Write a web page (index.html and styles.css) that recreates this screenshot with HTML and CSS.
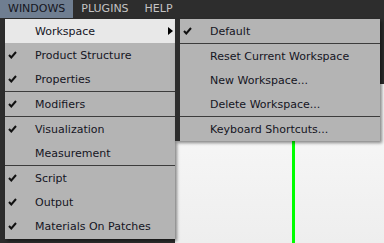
FILE: index.html
```html
<!DOCTYPE html>
<html>
<head>
<meta charset="utf-8">
<link rel="stylesheet" href="styles.css">
</head>
<body>
<div class="app">
  <div class="menubar">
    <div class="mb-item active">WINDOWS</div>
    <div class="mb-item">PLUGINS</div>
    <div class="mb-item">HELP</div>
  </div>
  <div class="workarea">
    <div class="leftpanel"></div>
    <div class="rightcol">
      <div class="toolbar"></div>
      <div class="viewport"><div class="greenline"></div></div>
    </div>
  </div>

  <div class="menu main-menu">
    <div class="item hover"><span class="chk"></span><span class="label">Workspace</span><span class="arrow"></span></div>
    <div class="item"><span class="chk"><svg width="9" height="8" viewBox="0 0 9 8"><path d="M1 4 L3.3 6.5 L8 1" fill="none" stroke="#111" stroke-width="2"/></svg></span><span class="label">Product Structure</span></div>
    <div class="item"><span class="chk"><svg width="9" height="8" viewBox="0 0 9 8"><path d="M1 4 L3.3 6.5 L8 1" fill="none" stroke="#111" stroke-width="2"/></svg></span><span class="label">Properties</span></div>
    <div class="sep"></div>
    <div class="item"><span class="chk"><svg width="9" height="8" viewBox="0 0 9 8"><path d="M1 4 L3.3 6.5 L8 1" fill="none" stroke="#111" stroke-width="2"/></svg></span><span class="label">Modifiers</span></div>
    <div class="sep"></div>
    <div class="item"><span class="chk"><svg width="9" height="8" viewBox="0 0 9 8"><path d="M1 4 L3.3 6.5 L8 1" fill="none" stroke="#111" stroke-width="2"/></svg></span><span class="label">Visualization</span></div>
    <div class="item"><span class="chk"></span><span class="label">Measurement</span></div>
    <div class="sep"></div>
    <div class="item"><span class="chk"><svg width="9" height="8" viewBox="0 0 9 8"><path d="M1 4 L3.3 6.5 L8 1" fill="none" stroke="#111" stroke-width="2"/></svg></span><span class="label">Script</span></div>
    <div class="item"><span class="chk"><svg width="9" height="8" viewBox="0 0 9 8"><path d="M1 4 L3.3 6.5 L8 1" fill="none" stroke="#111" stroke-width="2"/></svg></span><span class="label">Output</span></div>
    <div class="item"><span class="chk"><svg width="9" height="8" viewBox="0 0 9 8"><path d="M1 4 L3.3 6.5 L8 1" fill="none" stroke="#111" stroke-width="2"/></svg></span><span class="label">Materials On Patches</span></div>
  </div>

  <div class="menu sub-menu">
    <div class="item"><span class="chk"><svg width="9" height="8" viewBox="0 0 9 8"><path d="M1 4 L3.3 6.5 L8 1" fill="none" stroke="#111" stroke-width="2"/></svg></span><span class="label">Default</span></div>
    <div class="sep"></div>
    <div class="item"><span class="chk"></span><span class="label">Reset Current Workspace</span></div>
    <div class="item"><span class="chk"></span><span class="label">New Workspace...</span></div>
    <div class="item"><span class="chk"></span><span class="label">Delete Workspace...</span></div>
    <div class="sep"></div>
    <div class="item"><span class="chk"></span><span class="label">Keyboard Shortcuts...</span></div>
  </div>
</div>
</body>
</html>
```
FILE: styles.css
```css
html, body {
  margin: 0;
  padding: 0;
  width: 384px;
  height: 243px;
  overflow: hidden;
  background: #2d2d2d;
  font-family: "DejaVu Sans", sans-serif;
  font-size: 11px;
}

.app {
  position: relative;
  width: 384px;
  height: 243px;
  display: flex;
  flex-direction: column;
}

.menubar {
  height: 19px;
  display: flex;
  align-items: flex-start;
  background: #2d2d2d;
}

.mb-item {
  height: 18px;
  line-height: 18px;
  padding: 0 8px;
  color: #c4c4c4;
}

.mb-item.active {
  background: #6f7e91;
  color: #151520;
}

.workarea {
  flex: 1;
  display: flex;
}

.leftpanel {
  width: 175px;
  background: #2d2d2d;
}

.rightcol {
  flex: 1;
  display: flex;
  flex-direction: column;
}

.toolbar {
  height: 65px;
  background: #2d2d2d;
}

.viewport {
  flex: 1;
  background: linear-gradient(#fafafa, #eeeeee);
  padding-left: 117px;
  display: flex;
}

.greenline {
  width: 3px;
  background: #00ff00;
}

.menu {
  position: absolute;
  top: 19px;
  background: #b4b4b4;
  box-shadow: 2px 2px 3px rgba(0, 0, 0, 0.45);
  color: #15151f;
}

.main-menu {
  left: 5px;
  width: 170px;
  padding-bottom: 1px;
}

.sub-menu {
  left: 175px;
  width: 200px;
  border-left: 5px solid #2d2d2d;
}

.item {
  height: 24px;
  display: flex;
  align-items: center;
  position: relative;
}

.item.hover {
  background: #e8e8e8;
}

.chk {
  width: 30px;
  padding-left: 3px;
  box-sizing: border-box;
  display: flex;
  align-items: center;
}

.label {
  flex: 1;
}

.arrow {
  width: 0;
  height: 0;
  border-left: 5px solid #000;
  border-top: 4px solid transparent;
  border-bottom: 4px solid transparent;
  margin-right: 2px;
}

.sep {
  height: 1px;
  background: #3c3c3c;
}
```
